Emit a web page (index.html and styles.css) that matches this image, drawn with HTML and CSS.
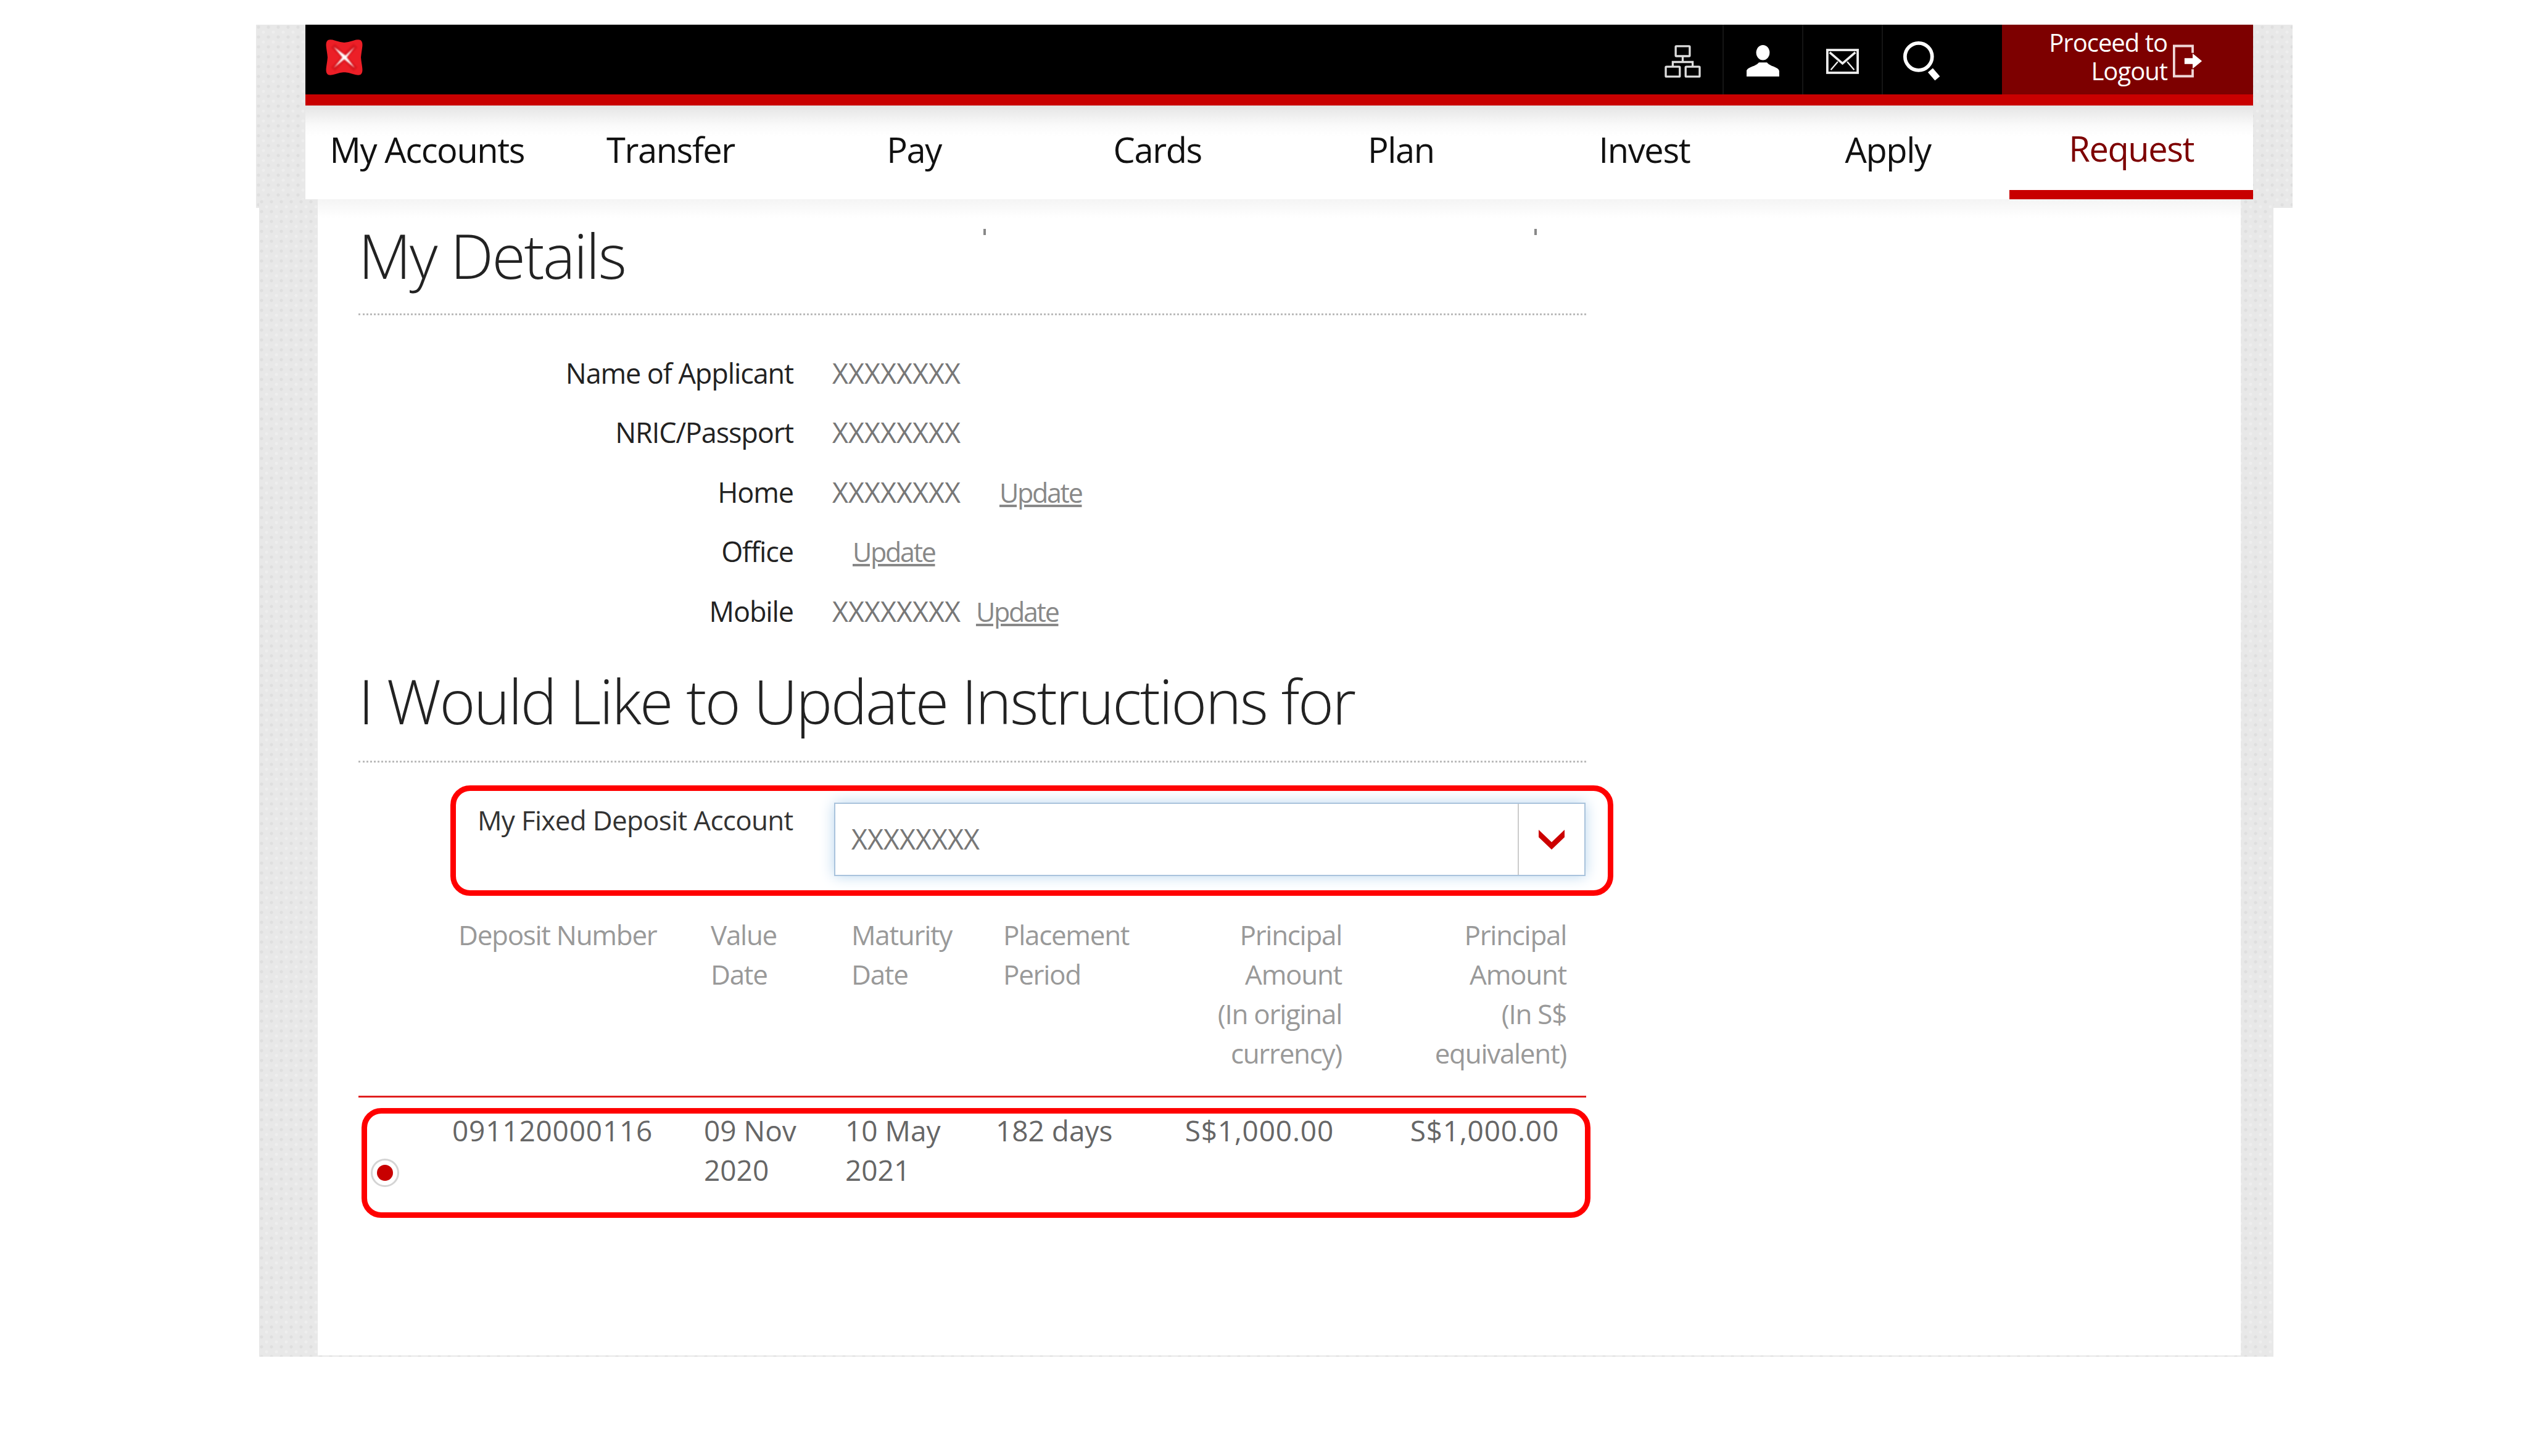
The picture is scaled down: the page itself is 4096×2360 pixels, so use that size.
FILE: index.html
```html
<!DOCTYPE html>
<html lang="en">
<head>
<meta charset="utf-8">
<title>My Details</title>
<link rel="stylesheet" href="styles.css">
</head>
<body>
<div class="band">
  <header class="shell">
    <div class="topbar">
      <svg class="logo" viewBox="0 0 66 62">
        <defs><filter id="soft" x="-20%" y="-20%" width="140%" height="140%"><feGaussianBlur stdDeviation="1.1"/></filter></defs>
        <path d="M7 4 C14 1 18 7 33 8 C48 7 52 1 59 4 C64 8 60 18 59 31 C60 44 64 54 59 58 C52 61 48 55 33 54 C18 55 14 61 7 58 C2 54 6 44 7 31 C6 18 2 8 7 4Z" fill="#ec1f27" stroke="#ec1f27" stroke-width="2" stroke-linejoin="round"/>
        <path d="M15 12 L33 31 L51 12 M15 50 L33 31 L51 50" fill="none" stroke="#c50b12" stroke-width="8" opacity=".55" filter="url(#soft)"/>
        <path d="M16 14 L35 28 L50 14 L37 31 L50 48 L33 34 L16 48 L30 31Z" fill="#fff" filter="url(#soft)"/>
      </svg>
      <div class="tools">
        <div class="tool"><svg class="ico ico-map" viewBox="0 0 62 57" fill="none" stroke="#ddd" stroke-width="3.5"><rect x="19" y="2" width="24" height="17" rx="1"/><path d="M31 19V29M14 37V29H48V37"/><rect x="2" y="37" width="24" height="17" rx="1"/><rect x="36" y="37" width="24" height="17" rx="1"/></svg></div>
        <div class="tool"><svg class="ico ico-user" viewBox="0 0 56 54"><ellipse cx="28" cy="13" rx="11.5" ry="13" fill="#fff"/><path d="M0 54V45C0 38 16 37 21 30H35C40 37 56 38 56 45V54Z" fill="#fff"/></svg></div>
        <div class="tool"><svg class="ico ico-mail" viewBox="0 0 56 43" fill="none" stroke="#eee"><rect x="2" y="2" width="52" height="39" stroke-width="4"/><path d="M6 6L28 25L50 6" stroke-width="4"/><path d="M8 36L20 22M48 36L36 22" stroke-width="2.5"/></svg></div>
        <div class="tool"><svg class="ico ico-search" viewBox="0 0 67 69" fill="none" stroke="#fff"><circle cx="27" cy="27" r="23" stroke-width="6"/><path d="M47 50L59 64" stroke-width="11"/></svg></div>
      </div>
      <a class="logout"><span>Proceed to<br>Logout</span><svg class="logout-ico" viewBox="0 0 52 56"><path d="M34 14V2H2V54H34V42" fill="none" stroke="#f0d8d8" stroke-width="4"/><path d="M20 23H34V15L50 28L34 41V33H20Z" fill="#fff"/></svg></a>
    </div>
    <div class="redline"></div>
    <nav class="nav">
      <a class="nav-item">My Accounts</a>
      <a class="nav-item">Transfer</a>
      <a class="nav-item">Pay</a>
      <a class="nav-item">Cards</a>
      <a class="nav-item">Plan</a>
      <a class="nav-item">Invest</a>
      <a class="nav-item">Apply</a>
      <a class="nav-item nav-active">Request</a>
    </nav>
  </header>
</div>
<div class="lower">
  <main class="sheet">
    <i class="speck speck-a"></i><i class="speck speck-b"></i>
    <h1 class="title">My Details</h1>
    <dl class="details">
      <div class="row"><dt>Name of Applicant</dt><dd>XXXXXXXX</dd></div>
      <div class="row"><dt>NRIC/Passport</dt><dd>XXXXXXXX</dd></div>
      <div class="row"><dt>Home</dt><dd>XXXXXXXX<a class="upd upd-home">Update</a></dd></div>
      <div class="row"><dt>Office</dt><dd><a class="upd upd-office">Update</a></dd></div>
      <div class="row"><dt>Mobile</dt><dd>XXXXXXXX<a class="upd upd-mobile">Update</a></dd></div>
    </dl>
    <h2 class="title title-two">I Would Like to Update Instructions for</h2>
    <div class="account-box">
      <div class="account-label">My Fixed Deposit Account</div>
      <div class="select"><span class="select-val">XXXXXXXX</span><span class="select-btn"><svg class="chev" viewBox="0 0 46 36"><path d="M2 2L23 22L44 2V14L23 34L2 14Z" fill="#c00"/></svg></span></div>
    </div>
    <div class="grid head">
      <div class="c1">Deposit Number</div>
      <div class="c2">Value<br>Date</div>
      <div class="c3">Maturity<br>Date</div>
      <div class="c4">Placement<br>Period</div>
      <div class="c5">Principal<br>Amount<br>(In original<br>currency)</div>
      <div class="c6">Principal<br>Amount<br>(In S$<br>equivalent)</div>
    </div>
    <div class="grid body-row">
      <div class="radio"><i></i></div>
      <div class="c1 wide">091120000116</div>
      <div class="c2">09 Nov<br>2020</div>
      <div class="c3">10 May<br>2021</div>
      <div class="c4">182 days</div>
      <div class="c5 wide">S$1,000.00</div>
      <div class="c6 wide">S$1,000.00</div>
    </div>
  </main>
</div>
</body>
</html>
```
FILE: styles.css
```css
* { box-sizing: border-box; }
html, body { margin: 0; background: #fff; }
body { font-family: "Open Sans", "Liberation Sans", sans-serif; height: 2360px; overflow: hidden; }
.band, .lower {
  background-color: #e8e8e8;
  background-image: radial-gradient(circle at 4px 4px, #dedede 2px, transparent 3px), radial-gradient(circle at 12px 12px, #eeeeee 2px, transparent 3px);
  background-size: 16px 16px;
}
.band { margin: 40px 0 0 415px; width: 3301px; height: 297px; padding-left: 80px; }
.shell { width: 3157px; }
.topbar { height: 113px; background: #000; display: flex; align-items: stretch; position: relative; }
.logo { width: 66px; height: 62px; margin: 22px 0 0 30px; }
.tools { margin-left: auto; display: flex; padding-right: 66px; }
.tool { width: 129px; border-left: 2px solid #151515; display: flex; align-items: center; justify-content: center; }
.tool:first-child { border-left: 0; }
.ico-map { width: 59px; height: 54px; margin-top: 6px; }
.ico-user { width: 53px; height: 51px; margin-top: 4px; }
.ico-mail { width: 53px; height: 41px; margin-top: 6px; }
.ico-search { width: 64px; height: 66px; margin-top: 4px; margin-left: 0; }
.logout { width: 407px; background: #7d0000; color: #fff; display: flex; align-items: center; padding-left: 68px; font-size: 40px; line-height: 46px; letter-spacing: -1px; }
.logout span { width: 200px; text-align: right; margin-top: -10px; }
.logout-ico { width: 49px; height: 54px; margin-left: 9px; margin-top: 4px; }
.redline { height: 18px; background: #c80000; }
.nav { height: 152px; background: linear-gradient(#e4e4e4, #fafafa 32px, #fff 50px); display: grid; grid-template-columns: repeat(8, 1fr); }
.nav-item { display: flex; justify-content: center; align-items: center; font-size: 56px; letter-spacing: -1.4px; color: #111; padding-bottom: 11px; }
.nav-active { color: #7d0000; border-bottom: 15px solid #c80000; padding-bottom: 0; }
.lower { position: relative; margin: -14px 0 0 420px; width: 3265px; height: 1876px; padding: 0 53px 2px 95px; }
.sheet { position: relative; width: 3117px; height: 1874px; background: linear-gradient(#f4f4f4, #fff 30px); padding-left: 66px; }
.speck { position: absolute; top: 48px; width: 4px; height: 10px; background: #888; }
.speck-a { left: 1079px; }
.speck-b { left: 1972px; }
.title { margin: 0; width: 1990px; font-weight: 300; font-size: 99px; line-height: 134px; height: 188px; padding-top: 24px; color: #222; letter-spacing: -2.5px; border-bottom: 3px dotted #bbb; }
.title-two { height: 189px; padding-top: 22px; letter-spacing: -2.5px; }
.details { margin: 0; padding-top: 45px; height: 536px; font-size: 45px; }
.row { display: flex; height: 96.5px; align-items: center; }
.row dt { width: 705px; text-align: right; color: #222; letter-spacing: -1.1px; }
.row dd { margin: 0 0 0 63px; color: #777; }
.upd { color: #888; text-decoration: underline; font-size: 43px; letter-spacing: -2.3px; }
.upd-home { margin-left: 63px; }
.upd-office { margin-left: 33px; }
.upd-mobile { margin-left: 25px; }
.account-box { margin: 37px 0 0 149px; width: 1885px; height: 179px; border: 9px solid #f00; border-radius: 32px; position: relative; }
.account-label { position: absolute; left: 35px; top: 17px; font-size: 44px; line-height: 60px; letter-spacing: -.7px; color: #333; }
.select { position: absolute; left: 613px; top: 19px; width: 1218px; height: 119px; border: 2px solid #a9c3dc; box-shadow: 0 0 22px #b9d6ee; background: #fff; display: flex; align-items: center; }
.select-val { flex: 1; padding-left: 26px; padding-bottom: 2px; font-size: 45px; color: #777; }
.select-btn { width: 108px; height: 100%; border-left: 2px solid #ccc; display: flex; align-items: center; justify-content: center; }
.chev { width: 46px; height: 36px; }
.grid { display: grid; width: 1990px; line-height: 64px; }
.c5, .c6 { text-align: right; }
.head { margin-top: 31px; height: 296px; padding-left: 162px; font-size: 44px; letter-spacing: -1.3px; color: #999; border-bottom: 3px solid #e02020; grid-template-columns: 409px 228px 246px 200px 349px 364px; }
.body-row { margin: 17px 0 0 5px; width: 1992px; height: 178px; border: 9px solid #f00; border-radius: 32px; position: relative; padding-left: 138px; font-size: 46px; color: #666; grid-template-columns: 408px 229px 244px 205px 343px 365px; align-content: start; }
.c1.wide, .c2, .c3, .c4, .c5.wide, .c6.wide { position: relative; }
.body-row > div:not(.radio) { margin-top: -5px; }
.wide { letter-spacing: .8px; }
.radio { position: absolute; left: 6px; top: 73px; width: 46px; height: 46px; border-radius: 50%; background: #fff; border: 3px solid #d4d4d4; display: flex; align-items: center; justify-content: center; }
.radio i { width: 26px; height: 26px; border-radius: 50%; background: #c80000; }
```
